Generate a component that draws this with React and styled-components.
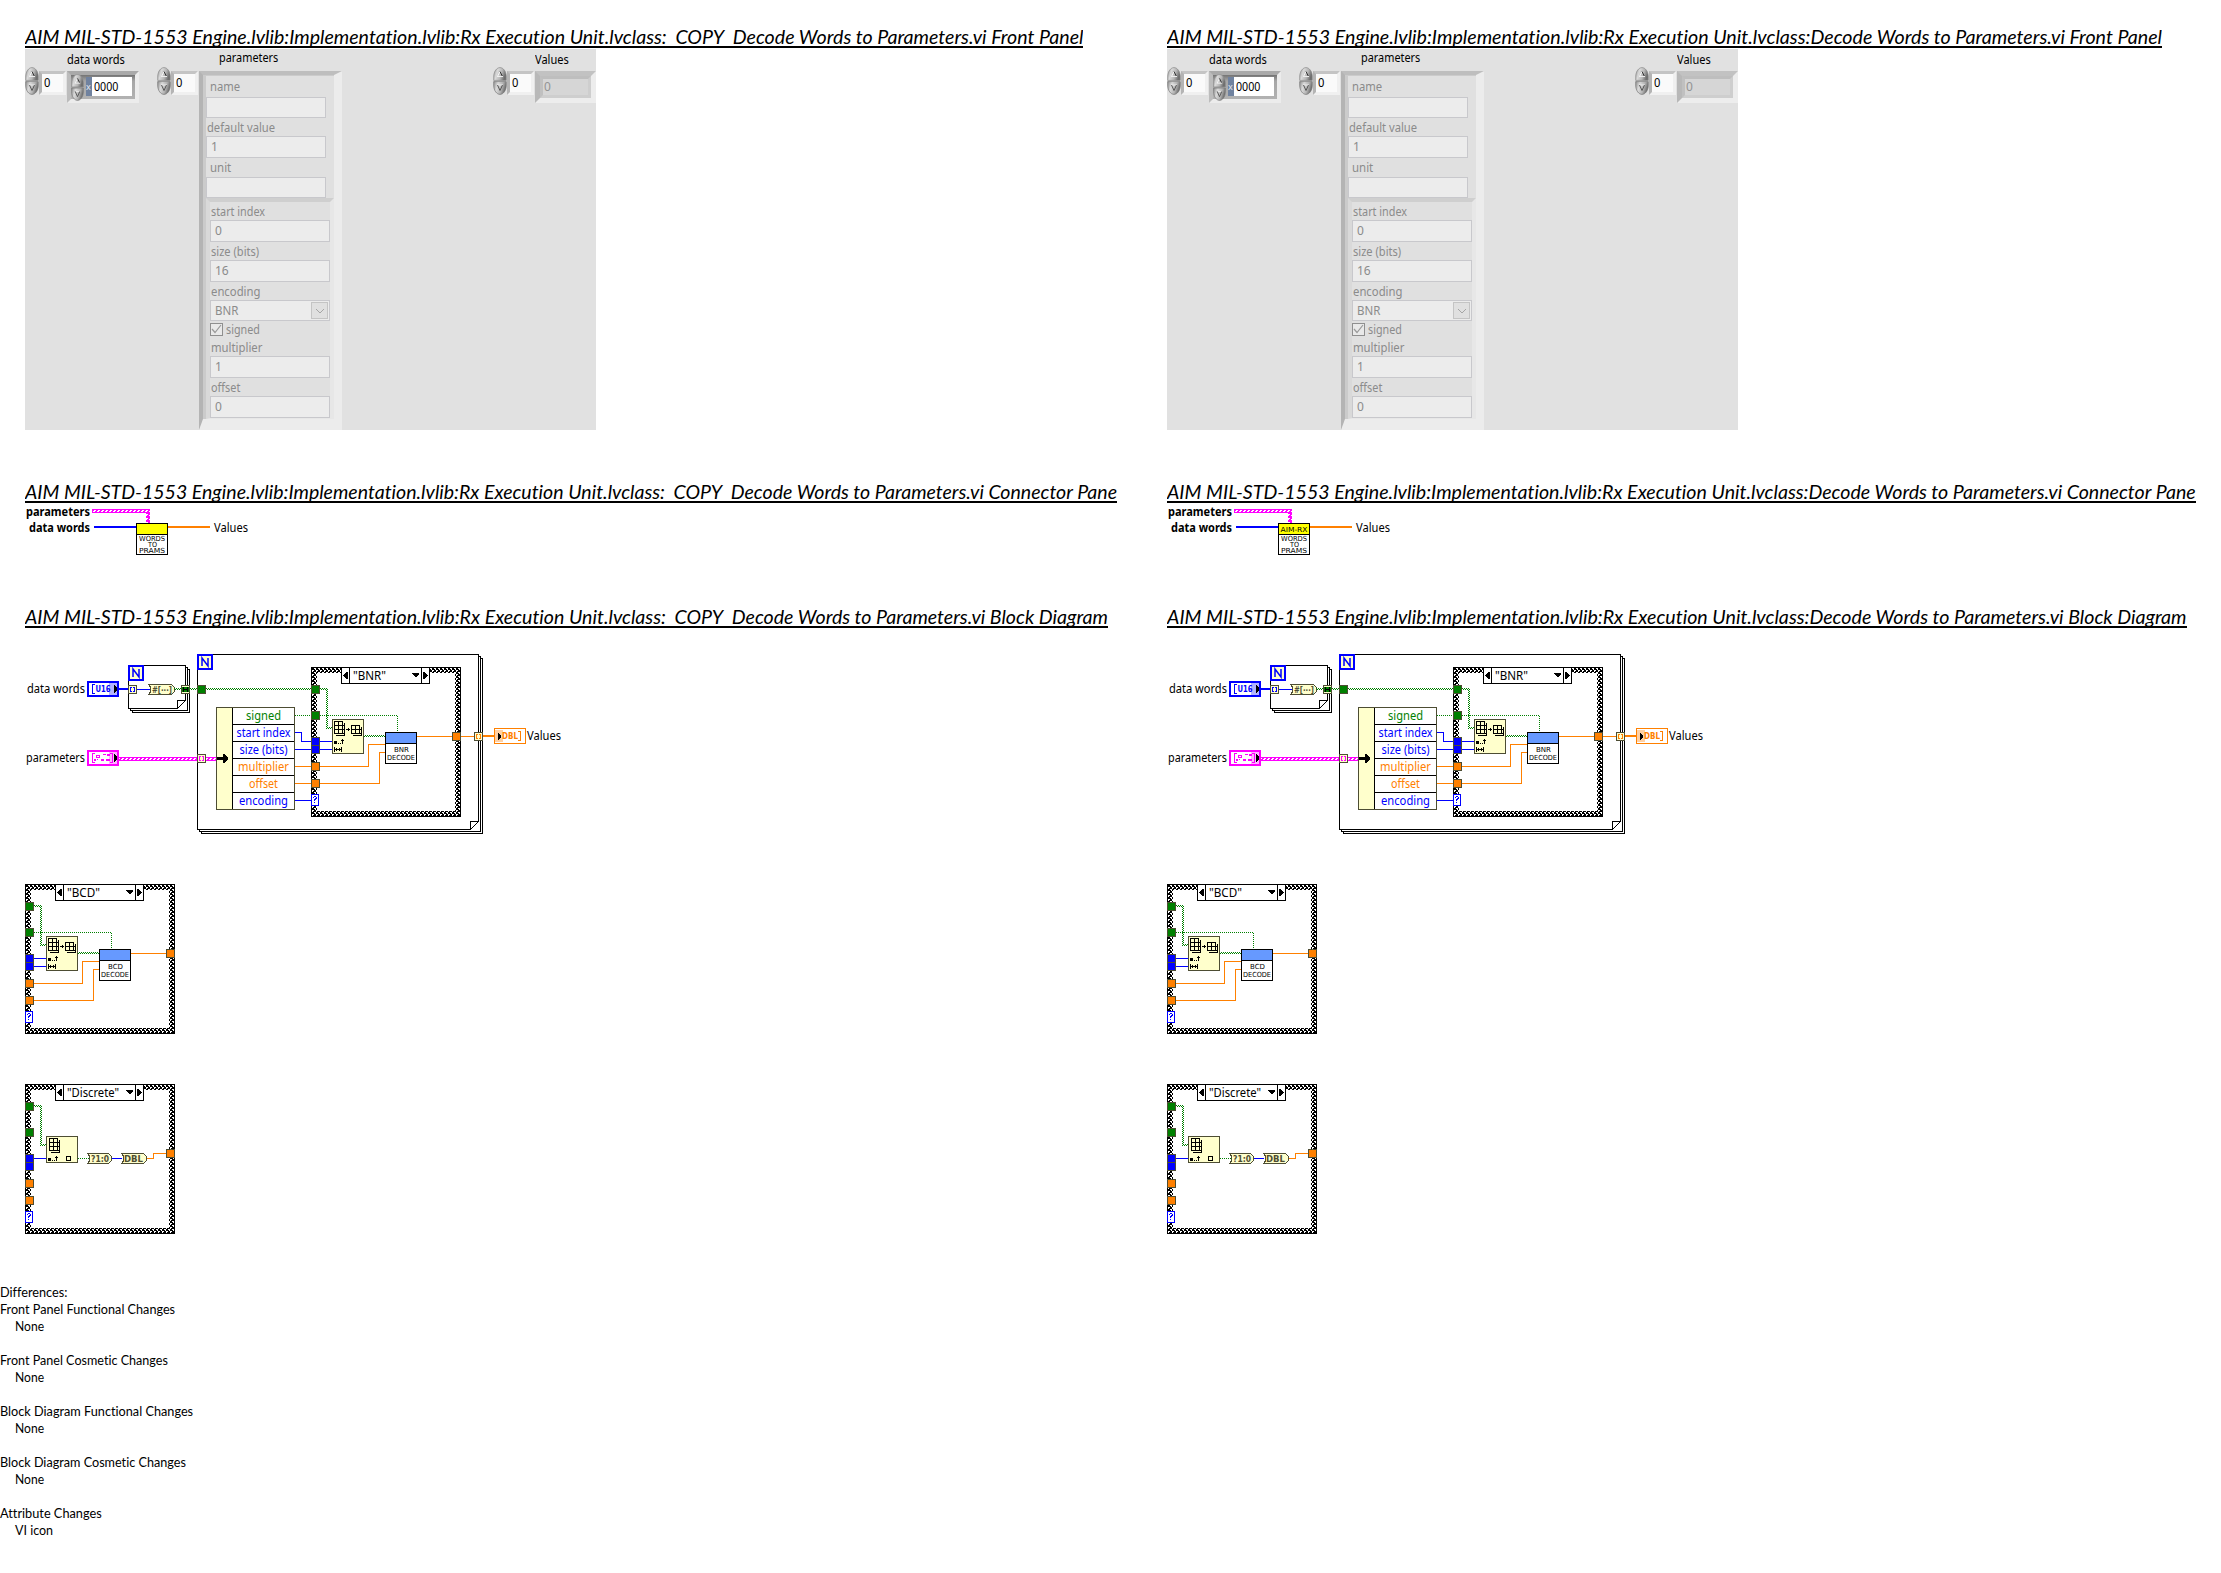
import React, { useLayoutEffect, useRef, useState } from "react";
import styled, { createGlobalStyle } from "styled-components";

const UI_FONT = '"Noto Sans", "Open Sans", sans-serif';
const DOC_FONT = 'Lato, "Open Sans", sans-serif';
const CREAM = "#ffffcc";
const OLIVE = "#4d4d33";
const GREEN = "#008000";
const BLUE = "#0000ff";
const ORANGE = "#ff8000";
const PINK = "#ff00ff";

const GlobalStyle = createGlobalStyle`
  * { box-sizing: border-box; }
  body { margin: 0; background: #fff; color: #000; }
`;

const Report = styled.main`
  width: 2221px;
  height: 1573px;
  overflow: hidden;
  background: #fff;
`;

const Columns = styled.div`
  display: flex;
  padding-left: 25px;
  height: 1284px;
`;

const Column = styled.section`
  width: 1142px;
  flex: none;
  display: flex;
  flex-direction: column;
  align-items: flex-start;
`;

const Heading = styled.h2`
  margin: ${(p) => p.$gap}px 0 0;
  width: ${(p) => p.$width}px;
  height: 24px;
  flex: none;
  border-bottom: 2px solid #000;
  overflow: hidden;
  font: italic 400 18.5px/27px ${DOC_FONT};
  font-variant-ligatures: none;
  white-space: nowrap;
`;

const FitSpan = styled.span`
  display: inline-block;
  white-space: pre;
  transform-origin: 0 0;
`;

function Fit({ width, children }) {
  const ref = useRef(null);
  const [scale, setScale] = useState(1);
  useLayoutEffect(() => {
    setScale(width / ref.current.offsetWidth);
  }, [width]);
  return (
    <FitSpan ref={ref} style={{ transform: `scaleX(${scale})` }}>
      {children}
    </FitSpan>
  );
}

/* ---------- front panel ---------- */

const Panel = styled.div`
  margin-top: 1px;
  width: 571px;
  height: 381px;
  flex: none;
  display: flex;
  background: #e1e1e1;
  font: 12px/18px ${UI_FONT};
`;

const ControlGroup = styled.div`
  width: ${(p) => p.$width}px;
  margin-left: ${(p) => p.$gap || 0}px;
  flex: none;
`;

const Caption = styled.div`
  height: 18px;
  padding-left: ${(p) => p.$indent}px;
  line-height: ${(p) => p.$line || 22}px;
  white-space: nowrap;
`;

const ControlRow = styled.div`
  display: flex;
  align-items: flex-start;
`;

const IndexBox = styled.div`
  width: 27px;
  height: 24px;
  margin: 4px 1px 0 0;
  flex: none;
  border: 3px solid;
  border-color: #c4c4c4 #f0f0f0 #f0f0f0 #b4b4b4;
  background: #fafafa;
  line-height: 17px;
  padding-left: 2px;
`;

const WordElement = styled.div`
  width: 73px;
  height: 32px;
  margin-top: 4px;
  display: flex;
  align-items: flex-start;
  border: 4px solid;
  border-color: #a9a9a9 #ececec #ececec #bcbcbc;
  background: linear-gradient(#747474 0, #a6a6a6 6px, #b2b2b2 100%);
  svg { margin-top: -1px; }
`;

const Radix = styled.span`
  width: 6px;
  height: 19px;
  margin: 2px 0 0 2px;
  background: #70829f;
  color: #e4e8f0;
  font-size: 9px;
  line-height: 20px;
  overflow: hidden;
`;

const WordField = styled.span`
  width: 40px;
  height: 19px;
  margin-top: 2px;
  padding-left: 2px;
  background: #fff;
  line-height: 19px;
`;

const ValueElement = styled.div`
  width: 62px;
  height: 32px;
  margin-top: 4px;
  border: 5px solid;
  border-color: #c2c2c2 #ededed #ededed #b8b8b8;
  background: #d6d6d6;
`;

const ValueField = styled.div`
  height: 22px;
  border: 3px solid;
  border-color: #bebebe #cecece #cecece #c0c0c0;
  color: #939393;
  line-height: 15px;
  padding-left: 1px;
`;

const Cluster = styled.div`
  width: 143px;
  height: 359px;
  margin-top: 4px;
  padding-left: 3px;
  border-style: solid;
  border-width: 4px 8px 11px 4px;
  border-color: #bebebe #ececec #ececec #b4b4b4;
  box-shadow: inset 3px 1px #cbcbcb;
  background: #e0e0e0;
  color: #8b8b8b;
`;

const InnerCluster = styled.div`
  width: 128px;
  height: 221px;
  border-style: solid;
  border-width: 4px 4px 1px 4px;
  border-color: #cfcfcf #e7e7e7 #e7e7e7 #d9d9d9;
`;

const FieldLabel = styled.div`
  display: flex;
  align-items: flex-end;
  height: ${(p) => p.$height || 18}px;
  padding-left: ${(p) => p.$indent}px;
  padding-bottom: ${(p) => p.$lift || 0}px;
  line-height: 16px;
`;

const FieldBox = styled.div`
  width: 120px;
  height: ${(p) => p.$height || 22}px;
  border: 1px solid #c8c8cc;
  background: #ececec;
  display: flex;
  justify-content: space-between;
  align-items: center;
  padding: 0 1px 0 4px;
  line-height: 18px;
`;

const DropButton = styled.span`
  width: 17px;
  height: 17px;
  border: 1px solid #c4c4c4;
  background: #e0e0e0;
  display: flex;
`;

const CheckRow = styled.div`
  display: flex;
  align-items: center;
  gap: 3px;
  height: 17px;
  line-height: 20px;
`;

const CheckBox = styled.span`
  width: 13px;
  height: 13px;
  border: 1px solid #8f8f8f;
  background: #e9e9e9;
  display: flex;
`;

const SpinnerIcon = styled.svg`
  flex: none;
`;

function Spinner({ width = 14, height = 28 }) {
  return (
    <SpinnerIcon width={width} height={height} viewBox="0 0 14 28" preserveAspectRatio="none">
      <defs>
        <linearGradient id="metal" x1="0" x2="1" y1="0" y2="0.3">
          <stop offset="0" stopColor="#8e8e8e" />
          <stop offset="0.35" stopColor="#dadada" />
          <stop offset="0.7" stopColor="#b5b5b5" />
          <stop offset="1" stopColor="#6e6e6e" />
        </linearGradient>
      </defs>
      <path d="M.7 13.4V10C.7 4 4 .6 7 .6S13.3 4 13.3 10v3.4Z" fill="url(#metal)" stroke="#8a8a8a" strokeWidth=".7" />
      <path d="M.7 14.6V18C.7 24 4 27.4 7 27.4s6.300-3.400 6.300-9.400v-3.400Z" fill="url(#metal)" stroke="#777" strokeWidth=".7" />
      <path d="M4.500 9.500L7 4.500" stroke="#f4f4f4" fill="none" />
      <path d="M7 4.500l2.500 5" stroke="#333" fill="none" />
      <path d="M4 9.500h6M4 18h6" stroke="#eee" fill="none" />
      <path d="M4.500 18L7 23.500L9.500 18" stroke="#555" fill="none" />
    </SpinnerIcon>
  );
}

function Field({ label, width, value, indent, labelHeight, boxHeight, lift }) {
  return (
    <>
      <FieldLabel $indent={indent} $height={labelHeight} $lift={lift}>
        <Fit width={width}>{label}</Fit>
      </FieldLabel>
      <FieldBox $height={boxHeight}>{value}</FieldBox>
    </>
  );
}

function FrontPanel() {
  return (
    <Panel>
      <ControlGroup $width={114}>
        <Caption $indent={42}><Fit width={58}>data words</Fit></Caption>
        <ControlRow>
          <Spinner />
          <IndexBox><Fit width={6.500}>0</Fit></IndexBox>
          <WordElement>
            <Spinner width={13} height={27} />
            <Radix>x</Radix>
            <WordField><Fit width={24}>0000</Fit></WordField>
          </WordElement>
        </ControlRow>
      </ControlGroup>
      <ControlGroup $width={185} $gap={18}>
        <Caption $indent={62} $line={18}><Fit width={59}>parameters</Fit></Caption>
        <ControlRow>
          <Spinner />
          <IndexBox><Fit width={6.500}>0</Fit></IndexBox>
          <Cluster>
            <Field label="name" width={30} indent={4} labelHeight={22} boxHeight={21} lift={2} />
            <Field label="default value" width={68} indent={1} value="1" />
            <Field label="unit" width={21} indent={4} labelHeight={19} boxHeight={21} lift={1} />
            <InnerCluster>
              <Field label="start index" width={54} indent={1} value="0" />
              <Field label="size (bits)" width={48} indent={1} value="16" />
              <FieldLabel $indent={1}><Fit width={49}>encoding</Fit></FieldLabel>
              <FieldBox $height={21}>
                <Fit width={23}>BNR</Fit>
                <DropButton>
                  <svg width="15" height="15"><path d="M4 6l4 4 4-4" fill="none" stroke="#a5a5a5" /></svg>
                </DropButton>
              </FieldBox>
              <CheckRow>
                <CheckBox>
                  <svg width="11" height="11"><path d="M1 5l3 3.500L10 1" fill="none" stroke="#999" strokeWidth="1.200" /></svg>
                </CheckBox>
                <Fit width={34}>signed</Fit>
              </CheckRow>
              <Field label="multiplier" width={51} indent={1} value="1" />
              <Field label="offset" width={29} indent={1} value="0" />
            </InnerCluster>
          </Cluster>
        </ControlRow>
      </ControlGroup>
      <ControlGroup $width={103} $gap={151}>
        <Caption $indent={42}><Fit width={34}>Values</Fit></Caption>
        <ControlRow>
          <Spinner />
          <IndexBox><Fit width={6.500}>0</Fit></IndexBox>
          <ValueElement><ValueField>0</ValueField></ValueElement>
        </ControlRow>
      </ControlGroup>
    </Panel>
  );
}

/* ---------- diagram drawing parts ---------- */

const Drawing = styled.svg`
  display: block;
  flex: none;
  margin-top: ${(p) => p.$gap}px;
  font: 12px ${UI_FONT};
`;

function Patterns() {
  return (
    <defs>
      <pattern id="hatch" width="4" height="4" patternUnits="userSpaceOnUse">
        <rect width="4" height="4" fill="#fff" />
        <path d="M0 0h2v1h-2zM0 1h3v1h-3zM2 2h2v1h-2zM1 3h3v1h-3z" fill="#000" />
      </pattern>
      <pattern id="boolWire" width="2" height="2" patternUnits="userSpaceOnUse">
        <path d="M0 0h1v1H0zM1 1h1v1H1z" fill={GREEN} />
      </pattern>
      <pattern id="clusterWire" width="4" height="4" patternUnits="userSpaceOnUse">
        <rect width="4" height="4" fill={PINK} />
        <path d="M2 2h2v1H2zM1 3h2v1H1z" fill="#fff" />
      </pattern>
    </defs>
  );
}

function Label({ x, y, w, children, fill = "#000", bold, size = 12, family }) {
  return (
    <text
      x={x} y={y} fill={fill} textLength={w} lengthAdjust="spacingAndGlyphs"
      fontSize={size} fontWeight={bold ? 700 : 400} fontFamily={family}
    >
      {children}
    </text>
  );
}

const Tiny = (props) => <Label size={7} family='"DejaVu Sans", sans-serif' {...props} />;
const Wire = ({ d, color, width = 1, dash }) => (
  <path d={d} fill="none" stroke={color} strokeWidth={width} strokeDasharray={dash} />
);
const Tunnel = ({ x, y, fill, h = 9 }) => (
  <rect x={x + 0.5} y={y + 0.5} width="8" height={h - 1} fill={fill} stroke={OLIVE} />
);
const IndexTunnel = ({ x, y, color }) => (
  <g>
    <Tunnel x={x} y={y} fill={CREAM} />
    <path d={`M${x + 2} ${y + 2}h2v1h-1v3h1v1h-2zM${x + 7} ${y + 2}h-2v1h1v3h-1v1h2z`} fill={color} />
  </g>
);

function ForLoop({ x, y, w, h }) {
  const r = x + w, b = y + h;
  return (
    <g fill="#fff" stroke="#000">
      <rect x={x + 4.5} y={y + 4.5} width={w - 1} height={h - 1} />
      <rect x={x + 2.5} y={y + 2.5} width={w - 1} height={h - 1} />
      <rect x={x + 0.5} y={y + 0.5} width={w - 1} height={h - 1} />
      <rect x={r - 8} y={b - 8} width="8" height="8" stroke="none" />
      <path d={`M${r - 8.5} ${b - 0.5}v-8h8z`} />
      <rect x={x + 1} y={y + 1} width="14" height="14" fill={CREAM} stroke={BLUE} strokeWidth="2" />
      <path d={`M${x + 5} ${y + 12}v-8l6 8v-8`} fill="none" stroke={BLUE} strokeWidth="1.500" shapeRendering="auto" />
    </g>
  );
}

const Grid = ({ x, y, rows }) => {
  const h = rows * 4;
  return (
    <g fill={CREAM} stroke="#000">
      <path d={`M${x + 2.5} ${y + 2.5}h8v${h}h-8z`} />
      <path d={`M${x + 1.5} ${y + 1.5}h8v${h}h-8z`} stroke="none" />
      <path d={`M${x + 0.5} ${y + 0.5}h8v${h}h-8zM${x + 4.5} ${y + 0.5}v${h}`} />
      {Array.from({ length: rows }, (_, i) => (
        <path key={i} d={`M${x + 0.5} ${y + 4.5 + i * 4}h10`} />
      ))}
    </g>
  );
};

const IndexGlyph = ({ y }) => (
  <path d={`M334 ${y}h3v3h-3zM338 ${y + 2}h1v1h-1zM340 ${y + 2}h1v1h-1zM342 ${y - 2}h1v5h-1zM341 ${y - 1}h3v1h-3z`} />
);

function SubsetNode() {
  return (
    <g>
      <rect x="332.500" y="719.500" width="31" height="34" fill={CREAM} stroke={OLIVE} />
      <Grid x={334} y={721} rows={3} />
      <Grid x={351} y={725} rows={2} />
      <path d="M346 729h4v1h-4zM348 728h1v3h-1z" />
      <IndexGlyph y={741} />
      <path d="M334 747h1v5h-1zM341 747h1v5h-1zM335 749h6v1h-6zM336 748h1v3h-1zM339 748h1v3h-1z" />
    </g>
  );
}

function ArrayInputWire() {
  return (
    <g fill="url(#boolWire)">
      <rect x="320" y="688" width="8" height="2" />
      <rect x="326" y="690" width="2" height="37" />
      <rect x="326" y="727" width="6" height="2" />
    </g>
  );
}

function DecodeBody({ name }) {
  return (
    <g>
      <ArrayInputWire />
      <Wire d="M320 715.500H397.500V732" color={GREEN} dash="1 1" />
      <rect x="364" y="735" width="21" height="2" fill="url(#boolWire)" />
      <Wire d="M320 741.500H332M320 749.500H332" color={BLUE} />
      <Wire d="M320 766.500H368.500V744.500H385M320 783.500H379.500V752.500H385M417 736.500H452" color={ORANGE} />
      <SubsetNode />
      <rect x="385.500" y="732.500" width="31" height="31" fill="#fff" stroke="#000" />
      <rect x="386" y="733" width="30" height="10" fill="#6699ff" />
      <path d="M385 743h32v1h-32z" />
      <Tiny x={394} y={752} w={15}>{name}</Tiny>
      <Tiny x={387} y={760} w={28}>DECODE</Tiny>
    </g>
  );
}

const Coercion = ({ x, w }) => (
  <path
    d={`M${x} 736.500h${w - 3}l2.500 2.500v5l-2.500 2.500h-${w - 3}l2-2.500v-5z`}
    fill={CREAM} stroke={OLIVE}
  />
);

function DiscreteBody() {
  return (
    <g>
      <ArrayInputWire />
      <Wire d="M320 741.500H332M398 741.500H408" color={BLUE} />
      <Wire d="M364 741.500H375" color={GREEN} dash="1 1" />
      <Wire d="M432 741.500H439.500V736.500H452" color={ORANGE} />
      <rect x="332.500" y="719.500" width="31" height="26" fill={CREAM} stroke={OLIVE} />
      <Grid x={335} y={721} rows={3} />
      <IndexGlyph y={741} />
      <rect x="352.500" y="739.500" width="4" height="4" fill="none" stroke="#000" />
      <Coercion x={373.5} w={24} />
      <Tiny x={377} y={745} w={18} bold size={8.5} fill={OLIVE}>?1:0</Tiny>
      <Coercion x={407.5} w={25} />
      <Tiny x={410} y={745} w={19} bold size={9} fill={OLIVE}>DBL</Tiny>
    </g>
  );
}

function CaseStructure({ name, nameWidth, children }) {
  return (
    <g>
      <rect x="311" y="667" width="150" height="150" fill="url(#hatch)" />
      <rect x="311.500" y="667.500" width="149" height="149" fill="none" stroke="#000" />
      <rect x="317" y="673" width="138" height="138" fill="#fff" />
      <path d="M341.500 667.500h88v16h-88zM349.500 667v17M421.500 667v17" fill="#fff" stroke="#000" />
      <path d="M348 672v7h-1l-4-3v-1l4-3zM423 672v7h1l4-3v-1l-4-3zM412 673h7v1l-3 3h-1l-3-3z" />
      <Label x={353} y={680} w={nameWidth}>{name}</Label>
      {children}
      <Tunnel x={311} y={685} fill={GREEN} />
      <Tunnel x={311} y={711} fill={GREEN} />
      <Tunnel x={311} y={737} fill={BLUE} />
      <Tunnel x={311} y={745} fill={BLUE} />
      <Tunnel x={311} y={762} fill={ORANGE} />
      <Tunnel x={311} y={779} fill={ORANGE} />
      <rect x="311.500" y="794.500" width="7" height="11" fill="#fff" stroke={BLUE} />
      <path d="M313 798v-1h1v-1h2v1h1v2h-1v1h-1v1h-1v-2h1v-1h1v-1h-2v1zM314 802h1v1h-1z" fill={BLUE} />
      <Tunnel x={452} y={732} fill={ORANGE} />
    </g>
  );
}

const ROWS = [
  ["signed", 35, GREEN],
  ["start index", 54, BLUE],
  ["size (bits)", 48, BLUE],
  ["multiplier", 51, ORANGE],
  ["offset", 29, ORANGE],
  ["encoding", 49, BLUE],
];

function Unbundler() {
  return (
    <g>
      <rect x="216.500" y="707.500" width="78" height="102" fill="#fff" stroke={OLIVE} />
      <rect x="217" y="708" width="15" height="101" fill={CREAM} />
      <path d="M232 708h1v101h-1zM217 757h6v-3h1l4 4v1l-4 4h-1v-3h-6z" />
      {ROWS.map(([name, w, color], i) => (
        <g key={name}>
          {i > 0 && <path d={`M232 ${707 + i * 17}h62v1h-62z`} />}
          <Label x={263.5 - w / 2} y={720 + i * 17} w={w} fill={color} size={12.5}>{name}</Label>
        </g>
      ))}
    </g>
  );
}

function BlockDiagram() {
  return (
    <Drawing $gap={22} width="560" height="190" viewBox="25 650 560 190" shapeRendering="crispEdges">
      <Patterns />
      <ForLoop x={128} y={665} w={58} h={44} />
      <ForLoop x={197} y={654} w={282} h={176} />

      <Label x={27} y={693} w={58}>data words</Label>
      <rect x="88" y="682" width="30" height="14" fill="#fff" stroke={BLUE} strokeWidth="2" />
      <rect x="109" y="683" width="8" height="12" fill="#b3b3ff" />
      <path d="M92 684h3v1h-2v8h2v1h-3z" fill={BLUE} />
      <Tiny x={95.5} y={692} w={15} bold size={8.5} fill={BLUE}>U16</Tiny>
      <path d="M114 685l3 3v2l-3 3z" />
      <Wire d="M119 689H128" color={BLUE} width={2} />
      <IndexTunnel x={128} y={685} color={BLUE} />
      <Wire d="M137 689.500H150" color={BLUE} />
      <path d="M148.500 684.500h23l2.500 2.500v5l-2.500 2.500h-23l2-2.500v-5z" fill={CREAM} stroke={OLIVE} />
      <Tiny x={152} y={692.5} w={20} bold size={8} fill={OLIVE}>#[···]</Tiny>
      <rect x="174" y="688" width="7" height="2" fill="url(#boolWire)" />
      <Tunnel x={181} y={685} fill={GREEN} />
      <path d="M182 686h7v1h-7zM182 692h7v1h-7z" fill={CREAM} />
      <path d="M183 687h1v5h-1zM187 687h1v5h-1zM184 689h3v1h-3z" />
      <rect x="190" y="688" width="7" height="2" fill="url(#boolWire)" />
      <rect x="206" y="688" width="105" height="2" fill="url(#boolWire)" />
      <Tunnel x={197} y={685} fill={GREEN} />

      <Label x={26} y={762} w={59}>parameters</Label>
      <rect x="88" y="751" width="30" height="14" fill="#fff" stroke={PINK} strokeWidth="2" />
      <rect x="109" y="752" width="8" height="12" fill="#ffb3ff" />
      <path d="M92 753h3v1h-2v8h2v1h-3zM110 753h3v10h-3v-1h2v-8h-2z" fill={PINK} />
      <path d="M96 755h4v3h-4zM97 756v1h2v-1zM103 754h3v1h-3zM107 754h3v2h-3zM94 759h2v2h-2zM97 759h1v1h-1zM101 759h3v2h-3zM106 759h4v2h-4z" fill={PINK} fillRule="evenodd" />
      <path d="M114 754l3 3v2l-3 3z" />
      <rect x="119" y="757" width="97" height="4" fill="url(#clusterWire)" />
      <IndexTunnel x={197} y={754} color={PINK} />

      <Wire d="M295 715.500H311" color={GREEN} dash="1 1" />
      <Wire d="M295 732.500H301.500V741.500H311M295 749.500H311M295 800.500H311" color={BLUE} />
      <Wire d="M295 766.500H311M295 783.500H311" color={ORANGE} />
      <Unbundler />

      <CaseStructure name={'"BNR"'} nameWidth={33}><DecodeBody name="BNR" /></CaseStructure>

      <Wire d="M461 736.500H474" color={ORANGE} />
      <IndexTunnel x={474} y={732} color={ORANGE} />
      <Wire d="M483 736H494" color={ORANGE} width={2} />
      <rect x="494.500" y="728.500" width="31" height="15" fill="#fff" stroke={ORANGE} />
      <rect x="495" y="730" width="8" height="12" fill="#ffd0a3" />
      <Tiny x={502} y={739} w={16} bold size={8.5} fill={ORANGE}>DBL</Tiny>
      <path d="M518 731h3v10h-3v-1h2v-8h-2z" fill={ORANGE} />
      <path d="M498 733l3 3v1l-3 3z" />
      <Label x={527} y={740} w={34}>Values</Label>
    </Drawing>
  );
}

function CaseFrame({ gap, name, nameWidth, children }) {
  return (
    <Drawing $gap={gap} width="150" height="150" viewBox="311 667 150 150" shapeRendering="crispEdges">
      <Patterns />
      <CaseStructure name={name} nameWidth={nameWidth}>{children}</CaseStructure>
    </Drawing>
  );
}

function ConnectorPane({ banner }) {
  return (
    <Drawing $gap={1} width="240" height="54" viewBox="25 504 240 54" shapeRendering="crispEdges">
      <Patterns />
      <Label x={26} y={516} w={64} bold>parameters</Label>
      <Label x={29} y={532} w={61} bold>data words</Label>
      <path d="M92 509H150V523H146V513H92Z" fill="url(#clusterWire)" />
      <Wire d="M94 527H136" color={BLUE} width={2} />
      <Wire d="M168 527H210" color={ORANGE} width={2} />
      <rect x="136.500" y="523.500" width="31" height="31" fill="#fff" stroke="#000" />
      <rect x="137" y="524" width="30" height="10" fill="#ffff00" />
      <path d="M136 534h32v1h-32z" />
      {banner && <Tiny x={138.5} y={531.5} w={27}>{banner}</Tiny>}
      <Tiny x={139} y={541} w={26}>WORDS</Tiny>
      <Tiny x={148} y={547} w={9}>TO</Tiny>
      <Tiny x={139} y={553} w={26}>PRAMS</Tiny>
      <Label x={214} y={532} w={34}>Values</Label>
    </Drawing>
  );
}

/* ---------- report ---------- */

const PREFIX = "AIM MIL-STD-1553 Engine.lvlib:Implementation.lvlib:Rx Execution Unit.lvclass:";

function Title({ vi, section, width, gap }) {
  return (
    <Heading $gap={gap} $width={width}>
      <Fit width={width}>{`${PREFIX}${vi} ${section}`}</Fit>
    </Heading>
  );
}

function ViReport({ vi, widths, banner }) {
  return (
    <Column>
      <Title vi={vi} section="Front Panel" width={widths[0]} gap={24} />
      <FrontPanel />
      <Title vi={vi} section="Connector Pane" width={widths[1]} gap={49} />
      <ConnectorPane banner={banner} />
      <Title vi={vi} section="Block Diagram" width={widths[2]} gap={46} />
      <BlockDiagram />
      <CaseFrame gap={44} name={'"BCD"'} nameWidth={33}><DecodeBody name="BCD" /></CaseFrame>
      <CaseFrame gap={50} name={'"Discrete"'} nameWidth={52}><DiscreteBody /></CaseFrame>
    </Column>
  );
}

const Differences = styled.section`
  font: 12.5px/17px ${DOC_FONT};
  font-variant-ligatures: none;
`;

const Line = styled.div`
  height: 17px;
  padding-left: ${(p) => (p.$indent ? 15 : 0)}px;
  margin-bottom: ${(p) => (p.$last ? 17 : 0)}px;
`;

const CHANGES = [
  ["Front Panel Functional Changes", 175, "None", 29],
  ["Front Panel Cosmetic Changes", 168, "None", 29],
  ["Block Diagram Functional Changes", 193, "None", 29],
  ["Block Diagram Cosmetic Changes", 186, "None", 29],
  ["Attribute Changes", 102, "VI icon", 38],
];

export default function App() {
  return (
    <Report>
      <GlobalStyle />
      <Columns>
        <ViReport vi="_COPY_Decode Words to Parameters.vi" widths={[1058, 1092, 1083]} />
        <ViReport vi="Decode Words to Parameters.vi" widths={[995, 1029, 1020]} banner="AIM-RX" />
      </Columns>
      <Differences>
        <Line><Fit width={67}>Differences:</Fit></Line>
        {CHANGES.map(([title, w, item, iw]) => (
          <React.Fragment key={title}>
            <Line><Fit width={w}>{title}</Fit></Line>
            <Line $indent $last><Fit width={iw}>{item}</Fit></Line>
          </React.Fragment>
        ))}
      </Differences>
    </Report>
  );
}
